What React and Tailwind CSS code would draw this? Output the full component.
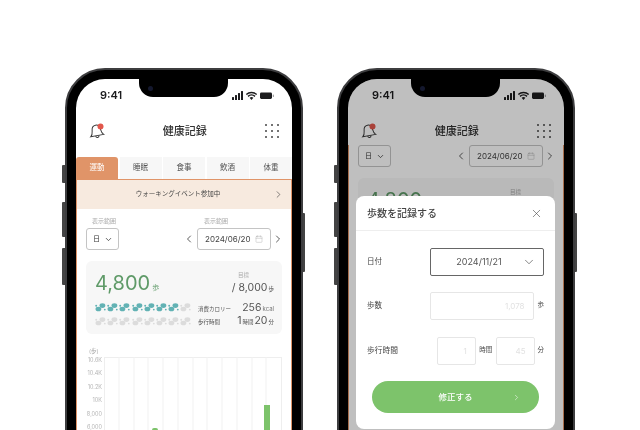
import React from "react";
import { ChevronLeft, ChevronRight, ChevronDown, Calendar, X } from "lucide-react";

const tabs = ["運動", "睡眠", "食事", "飲酒", "体重"];
const axis = ["10.6K", "10.4K", "10.2K", "10K", "8,000", "6,000"];

const Paw = ({ active }) => (
  <svg width="11" height="9" viewBox="0 0 11 9" className={active ? "block text-[#62b2b4]" : "block text-[#dcdcdc]"} fill="currentColor">
    <ellipse cx="7.4" cy="2.6" rx="2.9" ry="2.3" />
    <ellipse cx="3.4" cy="6" rx="2.9" ry="2.3" />
    <circle cx="1.2" cy="2.8" r="1" />
    <circle cx="9.8" cy="6.6" r="0.9" />
  </svg>
);

const StatusBar = () => (
  <div className="flex h-[32px] items-center justify-between pl-[24px] pr-[18px]">
    <span className="text-[11px] font-semibold text-[#1c1c1e]">9:41</span>
    <svg width="42" height="9" viewBox="0 0 42 9" fill="#1c1c1e">
      <rect x="0" y="6" width="2" height="3" rx="0.5" />
      <rect x="3" y="4" width="2" height="5" rx="0.5" />
      <rect x="6" y="2" width="2" height="7" rx="0.5" />
      <rect x="9" y="0" width="2" height="9" rx="0.5" />
      <path d="M19.5 9 L17.6 6.8 A3 3 0 0 1 21.4 6.8 Z" />
      <path d="M15.5 4.8 A6 6 0 0 1 23.5 4.8 L22.5 5.9 A4.5 4.5 0 0 0 16.5 5.9 Z" />
      <path d="M13.8 3 A8.4 8.4 0 0 1 25.2 3 L24.2 4.1 A7 7 0 0 0 14.8 4.1 Z" />
      <rect x="28" y="1.5" width="12" height="6.5" rx="1.4" />
      <rect x="40.8" y="3.6" width="1" height="2.4" rx="0.5" opacity="0.5" />
    </svg>
  </div>
);

const Header = ({ className }) => (
  <div className={`flex h-[40px] items-center justify-between pl-[12px] pr-[12px] ${className}`}>
    <svg width="18" height="18" viewBox="0 0 18 18" fill="none" stroke="#3a3a3a" strokeWidth="1">
      <g transform="rotate(-10 9 9)">
        <path d="M2 13.5 C4 12 4 10 4.3 7.5 C4.6 4.5 6.5 3 8.5 3 C10.5 3 12.4 4.5 12.7 7.5 C13 10 13 12 15 13.5 Z" />
        <path d="M6.8 13.8 C7 16 10 16 10.2 13.8" />
      </g>
      <circle cx="12.5" cy="4.5" r="3" fill="#e2574c" stroke="none" />
    </svg>
    <span className="text-[11px] font-medium text-[#333]">健康記録</span>
    <div className="grid grid-cols-3 gap-[3.5px] p-[1px]">
      {Array.from({ length: 9 }).map((_, i) => (
        <span key={i} className="h-[2.5px] w-[2.5px] rounded-full bg-[#444]" />
      ))}
    </div>
  </div>
);

const DateFilter = ({ labels }) => (
  <div className="mr-[-2px] flex items-end justify-between">
    <div>
      {labels && <div className="mb-[2px] h-[10px] pl-[6px] text-[6px] leading-[10px] text-[#aaa]">表示範囲</div>}
      <div className="flex h-[22px] w-[33px] items-center justify-between rounded-[3px] border border-[#c4c4c4] pl-[6px] pr-[5px] text-[7px] text-[#333]">
        日
        <ChevronDown size={9} strokeWidth={2} />
      </div>
    </div>
    <div className="flex items-center">
      <ChevronLeft size={12} strokeWidth={1.6} className="mb-[5px] mr-[2px] self-end text-[#333]" />
      <div>
        {labels && <div className="mb-[2px] h-[10px] pl-[7px] text-[6px] leading-[10px] text-[#aaa]">表示範囲</div>}
        <div className="flex h-[22px] w-[74px] items-center justify-between rounded-[3px] border border-[#c4c4c4] pl-[7px] pr-[7px] text-[8px] text-[#444]">
          2024/06/20
          <Calendar size={8} strokeWidth={1.2} className="text-[#aaa]" />
        </div>
      </div>
      <ChevronRight size={12} strokeWidth={1.6} className="mb-[5px] ml-[1px] self-end text-[#333]" />
    </div>
  </div>
);

const SummaryCard = () => (
  <div className="mt-[11px] h-[73px] rounded-[6px] bg-[#f7f7f7] pl-[9px] pr-[8px] pt-[8px]">
    <div className="flex h-[30px] items-start justify-between">
      <div className="flex items-baseline pt-[1px] text-[#5f9a68]">
        <span className="text-[20px] leading-[26px] font-normal">4,800</span>
        <span className="ml-[2px] text-[7px]">歩</span>
      </div>
      <div className="flex flex-col items-end pt-[2px]">
        <span className="mb-[2px] mr-[25px] text-[5.5px] leading-[8px] text-[#aaa]">目標</span>
        <div className="flex items-baseline text-[#555]">
          <span className="text-[10.5px] leading-[14px]">/ 8,000</span>
          <span className="ml-[1px] text-[5.5px]">歩</span>
        </div>
      </div>
    </div>
    <div className="mt-[4px] flex justify-between">
      <div className="grid grid-cols-8 gap-x-[1.2px] gap-y-[3px]">
        {Array.from({ length: 16 }).map((_, i) => (
          <Paw key={i} active={i < 7} />
        ))}
      </div>
      <div className="mt-[-2px] w-[76px] text-[#555]">
        <div className="flex h-[13px] items-baseline justify-between">
          <span className="text-[5.5px]">消費カロリー</span>
          <span className="text-[10.5px] leading-[13px]">256<span className="ml-[1px] text-[6px] text-[#777]">kcal</span></span>
        </div>
        <div className="flex h-[13px] items-baseline justify-between">
          <span className="text-[5.5px]">歩行時間</span>
          <span className="text-[10.5px] leading-[13px]">1<span className="mx-[1px] text-[5.5px]">時間</span>20<span className="ml-[1px] text-[5.5px]">分</span></span>
        </div>
      </div>
    </div>
  </div>
);

const Chart = () => (
  <div className="mt-[12px]">
    <div className="h-[10px] pl-[3px] text-[5.5px] leading-[10px] text-[#aaa]">(歩)</div>
    <div className="mt-[1px] flex gap-[2px]">
      <div className="flex w-[16px] flex-col items-end">
        {axis.map((v) => (
          <span key={v} className="h-[13.4px] text-[5.5px] leading-[6px] text-[#b5b5b5]">{v}</span>
        ))}
      </div>
      <svg width="178" height="90" viewBox="0 0 178 90" className="shrink-0">
        <rect x="0.5" y="0.5" width="177" height="89" fill="none" stroke="#eeeeee" />
        {[15, 30, 44, 59, 74, 89, 103, 118, 133, 148, 162].map((x) => (
          <line key={x} x1={x} x2={x} y1="0" y2="90" stroke="#f1f1f1" />
        ))}
        <rect x="160" y="48" width="6" height="42" fill="#7dc36b" />
        <rect x="48" y="71" width="6" height="19" rx="2" fill="#7dc36b" />
      </svg>
    </div>
  </div>
);

const Phone = ({ children }) => (
  <div className="relative h-[500px] w-[238px] shrink-0">
    <div className="absolute left-[-3px] top-[97px] h-[18px] w-[3px] rounded-l-[1px] bg-[#444]" />
    <div className="absolute left-[-3px] top-[134px] h-[35px] w-[3px] rounded-l-[1px] bg-[#444]" />
    <div className="absolute left-[-3px] top-[180px] h-[37px] w-[3px] rounded-l-[1px] bg-[#444]" />
    <div className="absolute right-[-2px] top-[145px] h-[59px] w-[2px] rounded-r-[1px] bg-[#444]" />
    <div className="h-full rounded-[40px] border-[2px] border-[#3d3d3f] bg-black p-[9px]">
      <div className="relative h-full overflow-hidden rounded-[29px] bg-white font-['Inter','Noto_Sans_CJK_JP',sans-serif]">
        {children}
        <div className="absolute left-[63px] top-0 flex h-[18px] w-[89px] items-center rounded-b-[14px] bg-black pl-[9px]">
          <span className="h-[5px] w-[5px] rounded-full bg-[#14182e]" />
        </div>
      </div>
    </div>
  </div>
);

const Field = ({ value, className }) => (
  <div className={`flex h-[28px] items-center justify-end rounded-[2px] border border-[#e6e6e6] pr-[8px] text-[8px] text-[#e2e2e2] ${className}`}>
    {value}
  </div>
);

const Modal = () => (
  <div className="absolute inset-0 bg-black/25 pl-[8px] pr-[9px] pt-[117px]">
    <div className="w-[199px] rounded-[8px] bg-white">
      <div className="flex h-[35px] items-center justify-between border-b border-[#eeeeee] pl-[11px] pr-[12px]">
        <span className="text-[10px] font-medium text-[#444]">歩数を記録する</span>
        <X size={13} strokeWidth={1.1} className="text-[#444]" />
      </div>
      <div className="px-[11px] pb-[16px] pt-[17px]">
        <div className="flex items-center justify-between">
          <span className="text-[7.5px] text-[#444]">日付</span>
          <div className="relative flex h-[28px] w-[114px] items-center justify-center rounded-[2px] border border-[#666] text-[9px] text-[#555]">
            <span className="pr-[16px]">2024/11/21</span>
            <ChevronDown size={14} strokeWidth={1.1} className="absolute right-[7px] text-[#444]" />
          </div>
        </div>
        <div className="mt-[16px] flex items-center">
          <span className="w-[63px] text-[7.5px] text-[#444]">歩数</span>
          <Field value="1,078" className="w-[104px]" />
          <span className="ml-[4px] text-[6.5px] text-[#444]">歩</span>
        </div>
        <div className="mt-[17px] flex items-center">
          <span className="w-[70px] text-[7.75px] text-[#444]">歩行時間</span>
          <Field value="1" className="w-[39px]" />
          <span className="w-[20px] text-center text-[6.5px] text-[#444]">時間</span>
          <Field value="45" className="w-[39px]" />
          <span className="ml-[3px] text-[6.5px] text-[#444]">分</span>
        </div>
        <div className="relative mx-[5px] mt-[16px] flex h-[32px] items-center justify-center rounded-full bg-[#7dc36b] text-[8.5px] font-medium text-white">
          修正する
          <ChevronRight size={9} strokeWidth={1.4} className="absolute right-[18px]" />
        </div>
      </div>
    </div>
  </div>
);

export default function App() {
  return (
    <div className="flex h-[430px] w-[640px] gap-[34px] overflow-hidden bg-white pl-[65px] pt-[68px] blur-[0.35px]">
      <Phone>
        <StatusBar />
        <Header className="" />
        <div className="mt-[6px] flex h-[22px] gap-[1.5px]">
          {tabs.map((t, i) => (
            <div
              key={t}
              className={
                i === 0
                  ? "flex w-[42px] items-center justify-center rounded-t-[3px] bg-[#e09468] text-[7.5px] text-white"
                  : "flex flex-1 items-center justify-center bg-[#f7f7f7] text-[7.5px] text-[#555]"
              }
            >
              {t}
            </div>
          ))}
        </div>
        <div className="border-x border-[#e09468] border-t">
          <div className="relative flex h-[29px] items-center justify-center bg-[#f7eadf] pr-[12px] text-[6.5px] text-[#444]">
            ウォーキングイベント参加中
            <ChevronRight size={11} strokeWidth={1.4} className="absolute right-[7px]" />
          </div>
          <div className="h-[300px] pl-[9px] pr-[9px] pt-[7px]">
            <DateFilter labels />
            <SummaryCard />
            <Chart />
          </div>
        </div>
      </Phone>
      <Phone>
        <StatusBar />
        <Header className="mb-[-6px]" />
        <div className="h-[400px] border-x border-[#e09468] px-[9px]">
          <DateFilter />
          <SummaryCard />
        </div>
        <Modal />
      </Phone>
    </div>
  );
}
